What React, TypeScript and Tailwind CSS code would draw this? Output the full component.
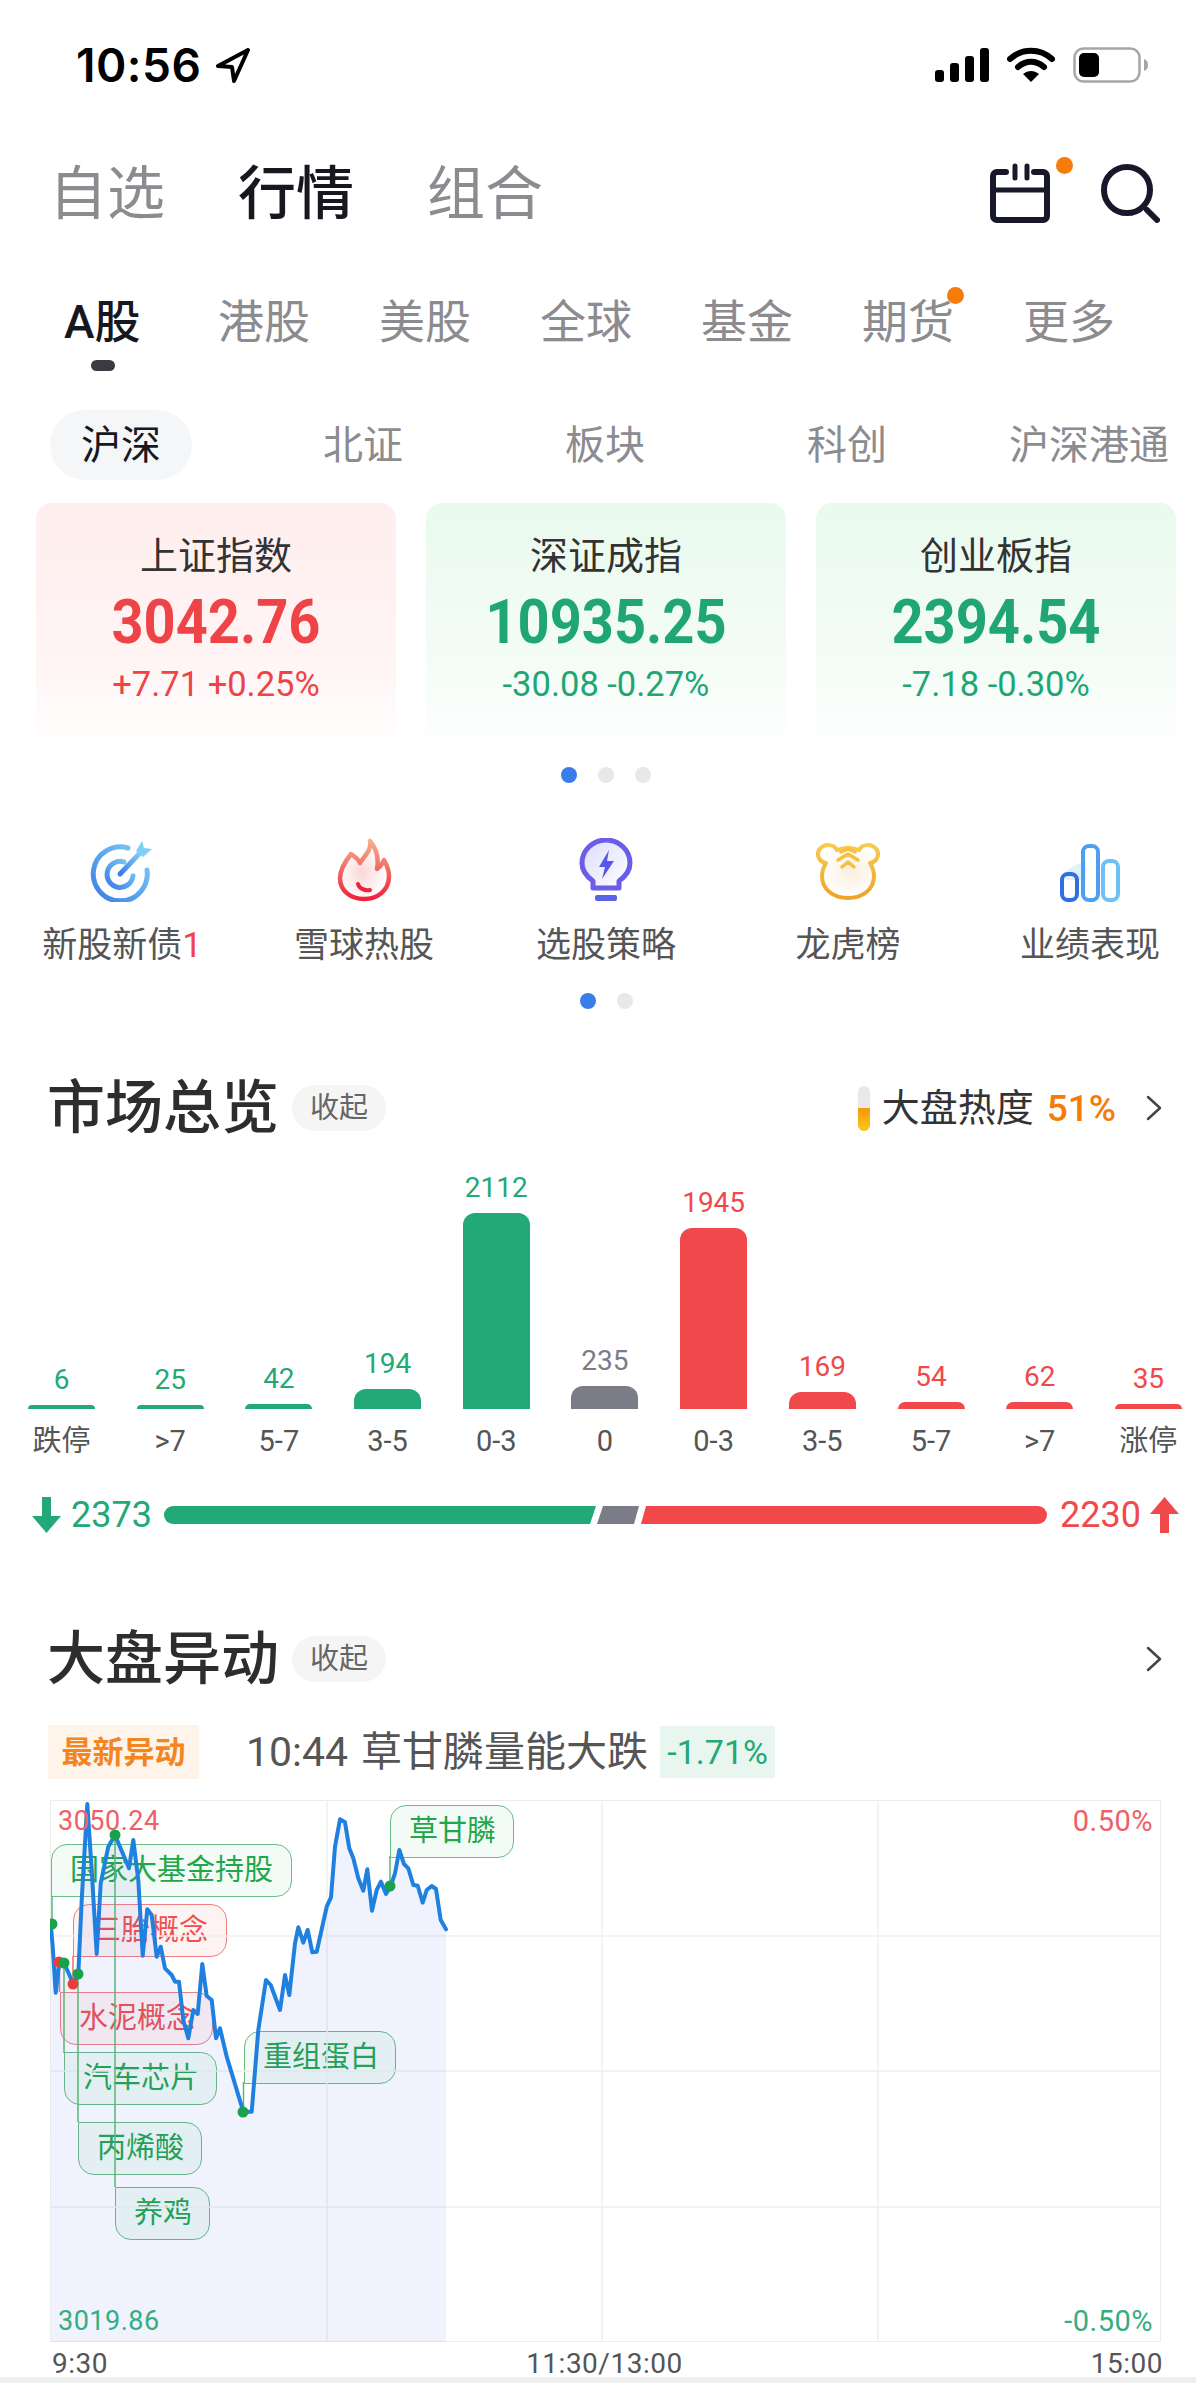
const topTabs = ["港股", "美股", "全球", "基金", "期货", "更多"];
const subTabs = ["北证", "板块", "科创", "沪深港通"];

const indexCards = [
  { name: "上证指数", value: "3042.76", delta: "+7.71 +0.25%", up: true },
  { name: "深证成指", value: "10935.25", delta: "-30.08 -0.27%", up: false },
  { name: "创业板指", value: "2394.54", delta: "-7.18 -0.30%", up: false },
];

const bars = [
  { value: "6", label: "跌停", h: "h-[4px]", bar: "bg-[#23a877]", text: "text-[#23a877]" },
  { value: "25", label: ">7", h: "h-[4px]", bar: "bg-[#23a877]", text: "text-[#23a877]" },
  { value: "42", label: "5-7", h: "h-[5px]", bar: "bg-[#23a877]", text: "text-[#23a877]" },
  { value: "194", label: "3-5", h: "h-[20px]", bar: "bg-[#23a877]", text: "text-[#23a877]" },
  { value: "2112", label: "0-3", h: "h-[196px]", bar: "bg-[#23a877]", text: "text-[#23a877]" },
  { value: "235", label: "0", h: "h-[23px]", bar: "bg-[#7b7c88]", text: "text-[#7b7c88]" },
  { value: "1945", label: "0-3", h: "h-[181px]", bar: "bg-[#f1494b]", text: "text-[#f1494b]" },
  { value: "169", label: "3-5", h: "h-[17px]", bar: "bg-[#f1494b]", text: "text-[#f1494b]" },
  { value: "54", label: "5-7", h: "h-[7px]", bar: "bg-[#f1494b]", text: "text-[#f1494b]" },
  { value: "62", label: ">7", h: "h-[7px]", bar: "bg-[#f1494b]", text: "text-[#f1494b]" },
  { value: "35", label: "涨停", h: "h-[5px]", bar: "bg-[#f1494b]", text: "text-[#f1494b]" },
];

// traced from the intraday line, in screen pixels
const rawLine = [
  [62, 400], [68, 470], [77, 608], [88, 515], [103, 520], [130, 582], [145, 553], [155, 330], [172, 42], [185, 240],
  [200, 492], [212, 280], [235, 170], [255, 135], [297, 235], [310, 150], [325, 270], [338, 497], [352, 358], [365, 375],
  [380, 500], [392, 470], [405, 535], [425, 555], [435, 575], [447, 575], [460, 690], [475, 745], [490, 660], [503, 672],
  [517, 522], [530, 618], [545, 630], [558, 745], [570, 715], [590, 800], [640, 965], [665, 965], [685, 720], [708, 570],
  [722, 585], [750, 660], [765, 555], [778, 615], [795, 460], [805, 412], [820, 458], [833, 420], [847, 487], [860, 485],
  [890, 350], [903, 322], [915, 170], [930, 88], [945, 97], [958, 175], [970, 205], [985, 265], [1000, 302], [1012, 238],
  [1026, 362], [1040, 300], [1053, 275], [1068, 312], [1082, 288], [1095, 250], [1108, 180], [1122, 222], [1135, 235],
  [1150, 285], [1163, 287], [1178, 338], [1190, 300], [1205, 288], [1218, 297], [1232, 390], [1248, 418],
];
const line = rawLine.map(([x, y]) => `${(30 + x / 3).toFixed(1)},${(1790 + y / 3).toFixed(1)}`).join(" ");
const lastX = (30 + 1248 / 3).toFixed(1);

const connectors = [
  { x: 52, y1: 1896, y2: 1924, c: "#58b673" },
  { x: 73, y1: 1956, y2: 1984, c: "#ee6a6a" },
  { x: 59.5, y1: 1962, y2: 1992, c: "#ee6a6a" },
  { x: 64, y1: 1963, y2: 2053, c: "#58b673" },
  { x: 78, y1: 1974, y2: 2122, c: "#58b673" },
  { x: 115, y1: 1835, y2: 2187, c: "#58b673" },
  { x: 243.5, y1: 2082, y2: 2112, c: "#58b673" },
  { x: 390, y1: 1856, y2: 1886, c: "#58b673" },
];

const dots = [
  { x: 52, y: 1924, c: "#16a34a" },
  { x: 59, y: 1962, c: "#ef3b3b" },
  { x: 64, y: 1963, c: "#16a34a" },
  { x: 73, y: 1984, c: "#ef3b3b" },
  { x: 78, y: 1974, c: "#16a34a" },
  { x: 115, y: 1835, c: "#16a34a" },
  { x: 243, y: 2112, c: "#16a34a" },
  { x: 390, y: 1886, c: "#16a34a" },
];

function Chevron() {
  return (
    <svg width="18" height="26" viewBox="0 0 18 26" fill="none">
      <path d="M3 2l12 11L3 24" stroke="#444" strokeWidth="2.500" strokeLinecap="round" strokeLinejoin="round" />
    </svg>
  );
}

function StatusBar() {
  return (
    <div className="h-[130px] flex items-center justify-between pl-[76px] pr-[47px]">
      <div className="flex items-center gap-[14px]">
        <span className="text-[46px] leading-none font-semibold text-black font-['Inter',sans-serif] tracking-[0.5px]">10:56</span>
        <svg width="36" height="36" viewBox="0 0 36 36" fill="none">
          <path d="M33 3L3 19l14 1 2 14L33 3z" stroke="#000" strokeWidth="4" strokeLinejoin="round" />
        </svg>
      </div>
      <div className="flex items-center gap-[18px]">
        <svg width="54" height="34" viewBox="0 0 54 34">
          <rect x="0" y="22" width="9" height="12" rx="3" fill="#000" />
          <rect x="15" y="15" width="9" height="19" rx="3" fill="#000" />
          <rect x="30" y="8" width="9" height="26" rx="3" fill="#000" />
          <rect x="45" y="0" width="9" height="34" rx="3" fill="#000" />
        </svg>
        <svg width="48" height="36" viewBox="0 0 48 36" fill="none">
          <path d="M3 12C15 1 33 1 45 12" stroke="#000" strokeWidth="6" strokeLinecap="round" />
          <path d="M11 20c8-7 18-7 26 0" stroke="#000" strokeWidth="6" strokeLinecap="round" />
          <path d="M24 35l-8-8c5-4 11-4 16 0l-8 8z" fill="#000" />
        </svg>
        <svg width="76" height="36" viewBox="0 0 76 36" fill="none">
          <rect x="1.5" y="1.5" width="65" height="33" rx="9" stroke="#a6a6a6" strokeWidth="2.5" />
          <rect x="6" y="6" width="20" height="24" rx="5" fill="#000" />
          <path d="M71 12c3 1 4 3 4 6s-1 5-4 6z" fill="#a6a6a6" />
        </svg>
      </div>
    </div>
  );
}

function CategoryTabs() {
  return (
    <div className="h-[126px] flex items-center justify-between pl-[49px] pr-[36px]">
      <div className="flex items-center gap-[73px] text-[58px] leading-none pt-[2px]">
        <span className="text-[#8b8b90]">自选</span>
        <span className="text-[#17171f] font-medium">行情</span>
        <span className="text-[#8b8b90]">组合</span>
      </div>
      <div className="flex items-center gap-[50px]">
        <div className="relative">
          <svg width="60" height="60" viewBox="0 0 60 60" fill="none">
            <path d="M16 9H7a4 4 0 0 0-4 4v40a4 4 0 0 0 4 4h46a4 4 0 0 0 4-4V13a4 4 0 0 0-4-4h-9" stroke="#17182a" strokeWidth="6" strokeLinecap="round" />
            <path d="M3 27h54M25 3v12M37 3v12" stroke="#17182a" strokeWidth="5" strokeLinecap="round" />
          </svg>
          <span className="absolute -top-[6px] -right-[23px] w-[17px] h-[17px] rounded-full bg-[#f57c0a]" />
        </div>
        <svg width="60" height="60" viewBox="0 0 60 60" fill="none">
          <circle cx="27" cy="27" r="23" stroke="#17182a" strokeWidth="6" />
          <path d="M47 47l10 10" stroke="#17182a" strokeWidth="6" strokeLinecap="round" />
        </svg>
      </div>
    </div>
  );
}

function MarketTabs() {
  return (
    <div className="h-[132px] flex items-center pl-[64px] text-[46px] leading-none text-[#8b8b90]">
      <div className="relative w-[154px] h-[56px] flex items-center text-[#17171f] font-medium">
        <span>A股</span>
        <span className="absolute left-[27px] top-[66px] w-[24px] h-[11px] rounded-full bg-[#3a3a40]" />
      </div>
      {topTabs.map((t) => (
        <div key={t} className="relative w-[161px] h-[56px] flex items-center">
          <span>{t}</span>
          {t === "期货" && <span className="absolute left-[85px] -top-[7px] w-[17px] h-[17px] rounded-full bg-[#f57c0a]" />}
        </div>
      ))}
    </div>
  );
}

function IndexTabs() {
  return (
    <div className="mt-[22px] h-[70px] flex items-center text-[40px] leading-none text-[#8b8b90]">
      <div className="w-[242px] shrink-0 flex justify-center">
        <span className="w-[142px] h-[70px] pt-[2px] rounded-full bg-[#f5f6f8] flex items-center justify-center text-[#17171f]">沪深</span>
      </div>
      {subTabs.map((t) => (
        <div key={t} className="w-[242px] shrink-0 pt-[2px] text-center whitespace-nowrap">{t}</div>
      ))}
    </div>
  );
}

function IndexCards() {
  return (
    <div className="mt-[23px] pl-[36px] flex gap-[30px]">
      {indexCards.map((c) => (
        <div
          key={c.name}
          className={`w-[360px] h-[252px] shrink-0 rounded-[16px] flex flex-col items-center bg-gradient-to-b via-60% to-white ${
            c.up ? "from-[#ffeeee] via-[#fff4f4]" : "from-[#e9faee] via-[#f3fcf6]"
          }`}
        >
          <div className="mt-[31px] h-[44px] text-[38px] leading-[44px] text-[#333]">{c.name}</div>
          <div className={`mt-[12px] h-[64px] text-[56px] leading-[64px] font-bold scale-y-110 ${c.up ? "text-[#ef4447]" : "text-[#1fa673]"}`}>{c.value}</div>
          <div className={`mt-[10px] h-[40px] text-[34.5px] leading-[40px] ${c.up ? "text-[#ef4447]" : "text-[#1fa673]"}`}>{c.delta}</div>
        </div>
      ))}
    </div>
  );
}

function PagerDots({ count, className }: { count: number; className: string }) {
  return (
    <div className={`flex justify-center gap-[21px] pl-[16px] ${className}`}>
      {Array.from({ length: count }).map((_, i) => (
        <span key={i} className={`w-[16px] h-[16px] rounded-full ${i === 0 ? "bg-[#3b7de8]" : "bg-[#e8e8ea]"}`} />
      ))}
    </div>
  );
}

function TargetIcon() {
  return (
    <svg width="64" height="64" viewBox="0 0 64 64" fill="none">
      <defs>
        <linearGradient id="tg" x1="0" y1="1" x2="1" y2="0">
          <stop offset="0" stopColor="#3a7de6" />
          <stop offset="1" stopColor="#7fd0f8" />
        </linearGradient>
      </defs>
      <path d="M38 10A27 27 0 1 0 57 32" stroke="url(#tg)" strokeWidth="5" strokeLinecap="round" />
      <path d="M34 24A13 13 0 1 0 43 38" stroke="url(#tg)" strokeWidth="5" strokeLinecap="round" />
      <path d="M30 36L50 15" stroke="url(#tg)" strokeWidth="5" strokeLinecap="round" />
      <path d="M46 13l6-10 2 7 8 1-9 8z" fill="#7fd0f8" />
    </svg>
  );
}

function FlameIcon() {
  return (
    <svg width="64" height="64" viewBox="0 0 64 64" fill="none">
      <defs>
        <linearGradient id="fl" x1="0" y1="0" x2="0" y2="1">
          <stop offset="0" stopColor="#f4b08c" />
          <stop offset="1" stopColor="#f0223a" />
        </linearGradient>
        <radialGradient id="flf" cx="0.45" cy="0.55" r="0.5">
          <stop offset="0" stopColor="#f9d8d6" />
          <stop offset="1" stopColor="#ffffff" />
        </radialGradient>
      </defs>
      <path
        d="M38 3C40 13 31 19 28 25 26 20 22 18 19 16 12 25 8 32 8 40 8 53 19 61 32 61 45 61 57 53 57 38 57 31 54 26 52 22 50 27 48 29 45 31 47 20 44 10 38 3Z"
        fill="url(#flf)"
        stroke="url(#fl)"
        strokeWidth="4.5"
        strokeLinejoin="round"
      />
      <path d="M26 46C27 50 32 53 38 52" stroke="#f0223a" strokeWidth="4" strokeLinecap="round" />
    </svg>
  );
}

function BulbIcon() {
  return (
    <svg width="64" height="64" viewBox="0 0 64 64" fill="none">
      <defs>
        <linearGradient id="bf" x1="0" y1="0" x2="1" y2="1">
          <stop offset="0" stopColor="#dcdcfb" />
          <stop offset="1" stopColor="#ffffff" />
        </linearGradient>
      </defs>
      <path
        d="M19 43C12 38 8 33 8 25A24 23 0 0 1 56 25C56 33 52 38 45 43L45 50H19Z"
        fill="url(#bf)"
        stroke="#6a5de8"
        strokeWidth="5"
        strokeLinejoin="round"
      />
      <path d="M35 12L25 29H31L28 41L40 23H33Z" fill="#5a57e8" />
      <rect x="21" y="57" width="22" height="6" rx="2" fill="#5a62e8" />
    </svg>
  );
}

function TigerIcon() {
  return (
    <svg width="66" height="64" viewBox="0 0 66 64" fill="none">
      <defs>
        <linearGradient id="tgr" x1="0" y1="0" x2="0" y2="1">
          <stop offset="0" stopColor="#f8ca4e" />
          <stop offset="1" stopColor="#eea42a" />
        </linearGradient>
        <radialGradient id="tgf" cx="0.55" cy="0.5" r="0.5">
          <stop offset="0" stopColor="#fbeedd" />
          <stop offset="1" stopColor="#ffffff" />
        </radialGradient>
      </defs>
      <path
        d="M22 12C29 9 37 9 44 12 47 6 57 5 62 12 65 18 61 24 55 25 58 30 59 34 59 38 59 52 47 60 33 60 19 60 7 52 7 38 7 34 8 30 11 25 5 24 1 18 4 12 9 5 19 6 22 12Z"
        fill="url(#tgf)"
        stroke="url(#tgr)"
        strokeWidth="4"
        strokeLinejoin="round"
      />
      <path d="M26 14L33 11 40 14M23 22L33 16 43 22M27 29L33 24 39 29" stroke="#f6bf3f" strokeWidth="3.5" strokeLinecap="round" strokeLinejoin="round" />
    </svg>
  );
}

function BarsIcon() {
  return (
    <svg width="60" height="64" viewBox="0 0 60 64" fill="none">
      <path d="M6 34C12 28 18 25 26 24V42H6Z" fill="#dff1fb" />
      <rect x="2" y="36" width="15" height="26" rx="6" stroke="#2f6fe0" strokeWidth="4" />
      <rect x="23" y="8" width="15" height="54" rx="6" stroke="#4f9ff0" strokeWidth="4" />
      <rect x="43" y="23" width="15" height="39" rx="6" stroke="#6ec0f5" strokeWidth="4" />
    </svg>
  );
}

function Shortcuts() {
  const items = [
    { label: "新股新债", icon: <TargetIcon /> },
    { label: "雪球热股", icon: <FlameIcon /> },
    { label: "选股策略", icon: <BulbIcon /> },
    { label: "龙虎榜", icon: <TigerIcon /> },
    { label: "业绩表现", icon: <BarsIcon /> },
  ];
  return (
    <div className="mt-[55px] flex pl-[1px]">
      {items.map((it, i) => (
        <div key={it.label} className="w-[242px] shrink-0 flex flex-col items-center">
          <div className="h-[64px] flex items-center justify-center">{it.icon}</div>
          <div className="mt-[20px] h-[48px] text-[35px] leading-[48px] text-[#555] whitespace-nowrap">
            {it.label}
            {i === 0 && <span className="text-[#ef4447]">1</span>}
          </div>
        </div>
      ))}
    </div>
  );
}

function SectionTitle({ title, right }: { title: string; right: React.ReactNode }) {
  return (
    <div className="h-[60px] flex items-center justify-between pl-[47px] pr-[33px]">
      <div className="flex items-center">
        <span className="text-[58px] leading-[60px] font-medium text-[#2d2d2d]">{title}</span>
        <span className="ml-[13px] w-[94px] h-[46px] rounded-full bg-[#f5f5f6] flex items-center justify-center text-[29px] leading-none text-[#666]">收起</span>
      </div>
      {right}
    </div>
  );
}

function Overview() {
  return (
    <>
      <div className="mt-[69px]">
        <SectionTitle
          title="市场总览"
          right={
            <div className="flex items-center">
              <div className="w-[12px] h-[45px] rounded-full bg-[#e9e9ea] overflow-hidden flex items-end">
                <div className="w-full h-[23px] bg-gradient-to-b from-[#f59a0a] to-[#fac51f]" />
              </div>
              <span className="ml-[12px] text-[38px] leading-none text-[#333]">大盘热度</span>
              <span className="ml-[13px] text-[37px] leading-none font-medium text-[#f57c0a]">51%</span>
              <span className="ml-[29px] flex"><Chevron /></span>
            </div>
          }
        />
      </div>
      <div className="h-[271px] flex items-end pl-[28px] gap-[41.7px]">
        {bars.map((b, i) => (
          <div key={i} className="w-[67px] shrink-0 flex flex-col items-center">
            <div className={`h-[28px] mb-[11px] text-[28px] leading-[28px] ${b.text}`}>{b.value}</div>
            <div className={`w-full rounded-t-[12px] ${b.h} ${b.bar}`} />
          </div>
        ))}
      </div>
      <div className="mt-[12px] h-[40px] flex items-center pl-[28px] gap-[41.7px]">
        {bars.map((b, i) => (
          <div key={i} className="w-[67px] shrink-0 text-center text-[29px] leading-[40px] text-[#555] whitespace-nowrap">{b.label}</div>
        ))}
      </div>
      <div className="mt-[34px] h-[40px] flex items-center pl-[32px]">
        <svg width="29" height="36" viewBox="0 0 29 36">
          <path d="M10 0h9v19h10L14.500 36 0 19h10z" fill="#23a877" />
        </svg>
        <span className="ml-[10px] w-[80px] text-[36px] leading-none text-[#23a877]">2373</span>
        <div className="ml-[13px] flex items-center">
          <div className="w-[432px] h-[18px] rounded-l-full bg-[#23a877] [clip-path:polygon(0_0,100%_0,calc(100%-6px)_100%,0_100%)]" />
          <div className="ml-[1px] w-[42px] h-[18px] bg-[#7b7c88] [clip-path:polygon(6px_0,100%_0,calc(100%-5px)_100%,0_100%)]" />
          <div className="ml-[2px] w-[406px] h-[18px] rounded-r-full bg-[#f1494b] [clip-path:polygon(5px_0,100%_0,100%_100%,0_100%)]" />
        </div>
        <span className="ml-[13px] w-[80px] text-[36px] leading-none text-[#f1494b]">2230</span>
        <svg className="ml-[10px]" width="29" height="36" viewBox="0 0 29 36">
          <path d="M10 36h9V17h10L14.500 0 0 17h10z" fill="#f1494b" />
        </svg>
      </div>
    </>
  );
}

function ChartTag({ text, className, red }: { text: string; className: string; red?: boolean }) {
  return (
    <div
      className={`absolute h-[53px] flex items-center pl-[18px] text-[29px] leading-none tracking-normal whitespace-nowrap border-[1.5px] ${
        red ? "text-[#ee5050] border-[#ee8080] bg-[#fdeeee]/70" : "text-[#22a64a] border-[#6dbb85] bg-[#eaf8ee]/60"
      } ${className}`}
    >
      {text}
    </div>
  );
}

function Movers() {
  return (
    <>
      <div className="mt-[94px]">
        <SectionTitle title="大盘异动" right={<span className="flex"><Chevron /></span>} />
      </div>
      <div className="mt-[36px] h-[54px] flex items-center pl-[48px]">
        <span className="w-[151px] h-[54px] bg-[#fef4ea] flex items-center justify-center text-[31px] leading-none font-bold text-[#f5851f]">最新异动</span>
        <span className="ml-[47px] text-[41px] leading-none text-[#555] whitespace-nowrap">10:44</span>
        <span className="ml-[13px] text-[41px] leading-none text-[#555] whitespace-nowrap">草甘膦量能大跌</span>
        <span className="ml-[12px] w-[115px] h-[52px] bg-[#e8f6ef] flex items-center justify-center text-[34px] leading-none text-[#23a877]">-1.71%</span>
      </div>
      <div className="mt-[21px] ml-[50px] w-[1111px] h-[542px] relative border border-[#ececec] text-[27px] leading-none tracking-[0.5px]">
        <ChartTag text="国家大基金持股" className="left-0 top-[43px] w-[241px] rounded-t-[16px] rounded-br-[16px]" />
        <ChartTag text="三胎概念" className="left-[22px] top-[103px] w-[154px] rounded-t-[16px] rounded-br-[16px]" red />
        <ChartTag text="水泥概念" className="left-[9px] top-[191px] w-[153px] rounded-b-[16px] rounded-tr-[16px]" red />
        <ChartTag text="汽车芯片" className="left-[13px] top-[251px] w-[153px] rounded-b-[16px] rounded-tr-[16px]" />
        <ChartTag text="丙烯酸" className="left-[27px] top-[321px] w-[124px] rounded-b-[16px] rounded-tr-[16px]" />
        <ChartTag text="养鸡" className="left-[64px] top-[386px] w-[95px] rounded-b-[16px] rounded-tr-[16px]" />
        <ChartTag text="重组蛋白" className="left-[193px] top-[230px] w-[152px] rounded-t-[16px] rounded-br-[16px]" />
        <ChartTag text="草甘膦" className="left-[339px] top-[4px] w-[124px] rounded-t-[16px] rounded-br-[16px]" />
        <svg className="absolute -left-px -top-px pointer-events-none" width="1111" height="542" viewBox="50 1800 1111 542" fill="none">
          <path d="M51 1936H1160M51 2071H1160M51 2207H1160M327 1800V2342M602 1800V2342M878 1800V2342" stroke="#efeff1" strokeWidth="1.500" />
          <polygon points={`51,2342 ${line} ${lastX},2342`} fill="#3c64f0" fillOpacity="0.08" />
          {connectors.map((c, i) => (
            <line key={i} x1={c.x} x2={c.x} y1={c.y1} y2={c.y2} stroke={c.c} strokeWidth="1.500" />
          ))}
          <polyline points={line} stroke="#1f80e0" strokeWidth="4" strokeLinejoin="round" strokeLinecap="round" />
          {dots.map((d, i) => (
            <circle key={i} cx={d.x} cy={d.y} r="5.500" fill={d.c} />
          ))}
        </svg>
        <span className="absolute left-[7px] top-[7px] text-[#ee5f66]">3050.24</span>
        <span className="absolute left-[7px] bottom-[6px] text-[#35ad82]">3019.86</span>
        <span className="absolute right-[7px] top-[6px] text-[29px] text-[#ee5f66]">0.50%</span>
        <span className="absolute right-[7px] bottom-[5px] text-[29px] text-[#35ad82]">-0.50%</span>
      </div>
      <div className="h-[35px] pl-[52px] pr-[33px] flex items-end justify-between text-[28px] leading-[27px] tracking-[0.5px] text-[#555]">
        <span>9:30</span>
        <span className="ml-[10px]">11:30/13:00</span>
        <span>15:00</span>
      </div>
      <div className="h-[6px] bg-[#efeff0]" />
    </>
  );
}

export default function App() {
  return (
    <div className="w-[1196px] h-[2383px] overflow-hidden bg-white font-['Roboto','Noto_Sans_CJK_SC',sans-serif]">
      <StatusBar />
      <CategoryTabs />
      <MarketTabs />
      <IndexTabs />
      <IndexCards />
      <PagerDots count={3} className="mt-[12px]" />
      <Shortcuts />
      <PagerDots count={2} className="mt-[23px]" />
      <Overview />
      <Movers />
    </div>
  );
}
